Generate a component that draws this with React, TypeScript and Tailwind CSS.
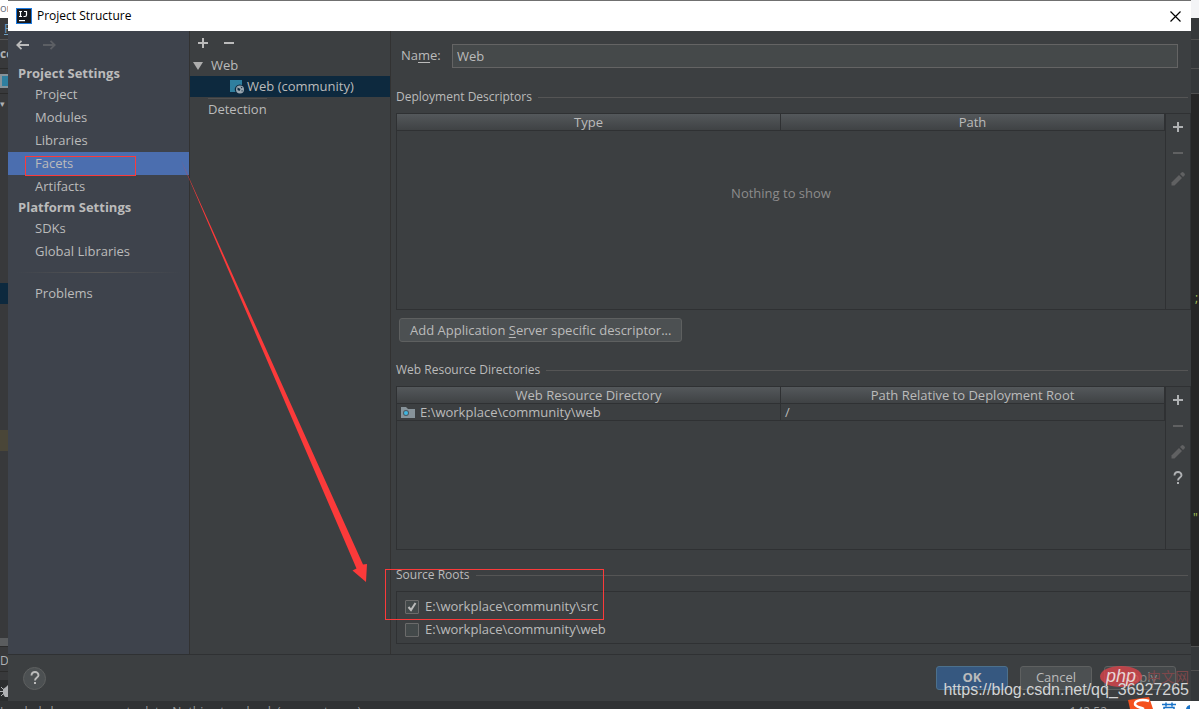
import React, { useState } from 'react';

interface ToolButtonProps {
  label: string;
  disabled?: boolean;
  children: React.ReactNode;
}

interface SourceRoot {
  path: string;
  checked: boolean;
}

const projectSettings = ['Project', 'Modules', 'Libraries', 'Facets', 'Artifacts'];
const platformSettings = ['SDKs', 'Global Libraries'];

const PlusIcon = () => (
  <svg width="10" height="10" viewBox="0 0 10 10" shapeRendering="crispEdges">
    <path d="M4 0h2v4h4v2H6v4H4V6H0V4h4z" fill="currentColor" />
  </svg>
);

const MinusIcon = () => (
  <svg width="10" height="10" viewBox="0 0 10 10" shapeRendering="crispEdges">
    <path d="M0 4h10v2H0z" fill="currentColor" />
  </svg>
);

const PencilIcon = () => (
  <svg width="14" height="14" viewBox="0 0 14 14">
    <path d="M0.5 10.5L8 3l3 3-7.500 7.500h-3z" fill="currentColor" />
    <path d="M9 2l1.500-1.500a1.500 1.500 0 0 1 2 0l1 1a1.500 1.500 0 0 1 0 2L12 5z" fill="currentColor" />
  </svg>
);

const QuestionIcon = () => (
  <svg width="10" height="14" viewBox="0 0 10 14" fill="none">
    <path d="M1.500 4.500C1.500 2 3 1 5 1s3.500 1.200 3.500 3.200C8.500 6.500 5 6.500 5 9.500" stroke="currentColor" strokeWidth="1.900" />
    <path d="M4 11h2v2H4z" fill="currentColor" />
  </svg>
);

const ArrowIcon = () => (
  <svg width="13" height="10" viewBox="0 0 13 10" fill="none">
    <path d="M13 5H1.500M5.500 0.800L1.300 5l4.200 4.200" stroke="currentColor" strokeWidth="1.800" />
  </svg>
);

const IdeaLogo = () => (
  <svg width="16" height="16" viewBox="0 0 16 16">
    <rect x="0.500" y="0.500" width="15" height="15" fill="#16181d" stroke="#1e7be0" />
    <path d="M3 3.500h3M4.500 3.500v5M3 8.500h3M8 3.500h3M10.500 3.500v3.500q0 1.500-1.500 1.500h-1.500" stroke="#fff" strokeWidth="1.200" fill="none" />
    <path d="M3 12h6v1.200H3z" fill="#fff" />
  </svg>
);

const WebFacetIcon = () => (
  <svg width="15" height="15" viewBox="0 0 15 15">
    <path d="M0 1h12v5a5 5 0 0 0-6.500 7H0z" fill="#2f7f9f" />
    <circle cx="10" cy="10.500" r="4" fill="#9aa7b0" />
    <path d="M7.500 8.500l3 1.500-1 2-2-1zM10.500 7.500l2 1-1 1zM11 12l1.500-1v1.500z" fill="#0d293e" />
  </svg>
);

const FolderIcon = () => (
  <svg width="14" height="11" viewBox="0 0 14 11">
    <path d="M0 0h5l2 2h7v9H0z" fill="#87939a" />
    <circle cx="5" cy="6" r="3" fill="#4b5a63" />
    <circle cx="5" cy="6" r="2" fill="#40b6e0" />
  </svg>
);

const ToolButton: React.FC<ToolButtonProps> = ({ label, disabled, children }) => (
  <button
    type="button"
    aria-label={label}
    disabled={disabled}
    className="flex h-[26px] w-full items-center justify-center text-[#afb1b3] disabled:text-[#606162]"
  >
    {children}
  </button>
);

const SectionTitle = ({ children }: { children: React.ReactNode }) => (
  <h2 className="mb-2 flex h-4 items-center gap-1.5 text-[12px] leading-4">
    {children}
    <span className="mr-[3px] h-px flex-1 bg-[#555555]" />
  </h2>
);

const NavItem = ({ label, active, onSelect }: { label: string; active: boolean; onSelect: () => void }) => (
  <button
    type="button"
    onClick={onSelect}
    className={`block h-[23px] w-full pl-[27px] text-left ${active ? 'bg-[#4b6eaf]' : ''}`}
  >
    {label}
  </button>
);

const HeaderRow = ({ columns }: { columns: string[] }) => (
  <thead>
    <tr className="h-[17px] bg-linear-to-b from-[#54585b] to-[#3e4143]">
      {columns.map((column) => (
        <th key={column} className="border-r border-b border-[#2f3133] p-0 font-normal leading-4">
          {column}
        </th>
      ))}
    </tr>
  </thead>
);

// Slice of the editor window that stays visible left of the dialog
const EditorLeft = () => (
  <div className="flex w-2 shrink-0 flex-col overflow-hidden bg-[#38393b] text-[#afb1b3]">
    <div className="h-[18px] bg-white text-[11px] leading-4 text-gray-500">or</div>
    <div className="h-[22px] border-b border-[#555555] pl-1 leading-5 text-[#6f9fc0] underline">F</div>
    <div className="h-[29px] border-b border-[#2b2b2b] text-[12px] font-bold leading-7">cc</div>
    <div className="flex h-[25px] items-center border-b border-[#2b2b2b]">
      <span className="h-3.5 w-2 shrink-0 border-2 border-r-0 border-[#87939a] bg-[#2f7f9f]" />
    </div>
    <div className="h-[189px] text-[9px] leading-5">▾</div>
    <div className="h-[21px] bg-[#0d293e]" />
    <div className="h-[126px]" />
    <div className="h-[21px] bg-[#4a4638]" />
    <div className="flex-1" />
    <div className="h-2 bg-[#5a5c5e]" />
    <div className="h-[26px] border-y border-[#2b2b2b] text-[12px] leading-7">D</div>
    <div className="h-2" />
    <div className="flex h-[21px] items-center bg-[#2b2d2e]">
      <svg width="8" height="14" viewBox="0 0 8 14" className="shrink-0">
        <path d="M1 3l2 2M0 7.500h3M1 12l2-2" stroke="#afb1b3" />
        <path d="M8 1L6 3l-3 2v5l2 3h3z" fill="#afb1b3" />
      </svg>
    </div>
  </div>
);

const EditorRight = () => (
  <div className="flex w-2 shrink-0 flex-col overflow-hidden bg-[#262626] text-[12px] text-[#a5c25c]">
    <div className="h-[18px] bg-gray-100" />
    <div className="h-[22px] border-b border-[#505050] bg-[#35383a]" />
    <div className="h-[29px] border-b border-[#505050] bg-[#35383a]" />
    <div className="h-[25px] border-b border-[#505050] bg-[#35383a]" />
    <div className="h-[194px]" />
    <div className="h-5 pl-1 leading-5">;</div>
    <div className="h-[200px]" />
    <div className="h-5 pl-0.5 leading-5">&quot;</div>
    <div className="flex-1" />
    <div className="h-[25px] border-y border-[#505050] bg-[#35383a]" />
    <div className="h-[30px] bg-[#35383a]" />
  </div>
);

const StatusBar = () => (
  <div className="flex h-2 shrink-0 justify-between overflow-hidden bg-[#303234] text-[12px] leading-[22px] text-[#9a9c9e]">
    <span>Loaded classes are up to date. Nothing to reload. (moments ago)</span>
    <span className="pr-[92px]">142:52</span>
  </div>
);

const Annotations = () => (
  <svg width="620" height="640" viewBox="0 0 620 640" fill="none" className="pointer-events-none absolute top-0 left-0">
    <rect x="25.500" y="156.500" width="110" height="19" stroke="#fb3a3a" />
    <rect x="385.500" y="569.500" width="218" height="50" stroke="#fb3a3a" />
    <path d="M181 160L363 564.500L367 564L366 582L352.500 570.500L356.500 568.500Z" fill="#fb3a3a" />
  </svg>
);

const Watermark = () => (
  <div className="pointer-events-none absolute right-0 bottom-0 h-12 w-64">
    <svg width="42" height="21" viewBox="0 0 42 21" className="absolute top-[5px] left-[157px]">
      <ellipse cx="21" cy="10.500" rx="21" ry="10.500" fill="#d8434a" fillOpacity="0.8" />
    </svg>
    <span className="absolute top-[5px] left-[163px] font-['Liberation_Sans'] text-[18px] leading-5 italic text-[#e8d4d4]">php</span>
    <span className="absolute top-[5px] left-[204px] font-['Noto_Sans_CJK_SC',sans-serif] text-[14px] leading-5 text-[#7d484b]">中文网</span>
    <span className="absolute right-2.5 bottom-[9px] font-['Liberation_Sans'] text-[16px] leading-5 text-[#d2d4d5]">
      https://blog.csdn.net/qq_36927265
    </span>
  </div>
);

// Input method bar that peeks in at the bottom right corner
const ImeBar = () => (
  <svg width="72" height="12" viewBox="0 0 72 12" className="pointer-events-none absolute right-0 bottom-0">
    <path d="M16 4h56v8H16z" fill="#fff" />
    <path d="M1 3L22 0l4 12H3z" fill="#f4511e" />
    <path d="M22 4c-6-2-14-1-14 3 0 3 5 3 9 5" stroke="#fff" strokeWidth="2.500" fill="none" />
    <path d="M35 7.500h14M39 5.500v4M45 5.500v4M37 12v-1.500h10V12" stroke="#1a73c8" strokeWidth="1.500" fill="none" />
    <path d="M59 12a5 5 0 0 1 4-4v4z" fill="#1a73c8" />
  </svg>
);

const App: React.FC = () => {
  const [section, setSection] = useState('Facets');
  const [name, setName] = useState('Web');
  const [roots, setRoots] = useState<SourceRoot[]>([
    { path: 'E:\\workplace\\community\\src', checked: true },
    { path: 'E:\\workplace\\community\\web', checked: false },
  ]);

  const toggleRoot = (path: string) => {
    setRoots(roots.map((root) => (root.path === path ? { ...root, checked: !root.checked } : root)));
  };

  return (
    <div className="relative flex min-h-screen flex-col overflow-hidden bg-[#323232] font-['Open_Sans',sans-serif] text-[13px] text-[#bbbbbb]">
      <div className="flex flex-1">
        <EditorLeft />

        <div className="flex min-w-0 flex-1 flex-col border-t border-[#707070] bg-[#3c3f41]">
          <header className="flex h-[30px] items-center gap-[5px] bg-white pr-2.5 pl-2 text-black">
            <IdeaLogo />
            <h1 className="flex-1 text-[12px]">Project Structure</h1>
            <button type="button" aria-label="Close">
              <svg width="11" height="11" viewBox="0 0 11 11">
                <path d="M0.500 0.500l10 10M10.500 0.500l-10 10" stroke="#000" strokeWidth="1.200" />
              </svg>
            </button>
          </header>

          <div className="flex flex-1">
            {/* Settings navigation */}
            <nav className="w-[182px] shrink-0 border-r border-[#323232] bg-[#3e434c] leading-[23px]">
              <div className="mb-[5px] flex h-7 items-center gap-3.5 pl-2">
                <button type="button" aria-label="Back" className="text-[#bbbbbb]">
                  <ArrowIcon />
                </button>
                <button type="button" aria-label="Forward" disabled className="rotate-180 text-[#5c5f64]">
                  <ArrowIcon />
                </button>
              </div>
              <h2 className="h-[19px] pl-2.5 font-bold leading-[19px]">Project Settings</h2>
              {projectSettings.map((item) => (
                <NavItem key={item} label={item} active={item === section} onSelect={() => setSection(item)} />
              ))}
              <h2 className="h-[19px] pl-2.5 font-bold leading-[19px]">Platform Settings</h2>
              {platformSettings.map((item) => (
                <NavItem key={item} label={item} active={item === section} onSelect={() => setSection(item)} />
              ))}
              <div className="mx-2 my-[9px] h-px bg-linear-to-r from-transparent via-[#555555] to-transparent" />
              <NavItem label="Problems" active={section === 'Problems'} onSelect={() => setSection('Problems')} />
            </nav>

            {/* Facet tree */}
            <div className="w-[201px] shrink-0 border-r border-[#323232] leading-[21px]">
              <div className="flex h-6 items-center gap-4 pl-2 text-[#bbbbbb]">
                <button type="button" aria-label="Add facet">
                  <PlusIcon />
                </button>
                <button type="button" aria-label="Remove facet">
                  <MinusIcon />
                </button>
              </div>
              <div className="flex h-[21px] items-center gap-2 pl-[3px]">
                <svg width="10" height="8" viewBox="0 0 10 8">
                  <path d="M0 0h10L5 8z" fill="#adadad" />
                </svg>
                Web
              </div>
              <div className="flex h-[21px] items-center gap-0.5 bg-[#0d293e] pl-10">
                <WebFacetIcon />
                Web (community)
              </div>
              <div className="flex pt-px pl-[18px]">
                <div className="border-t border-[#515151] leading-5">Detection</div>
              </div>
            </div>

            {/* Facet editor */}
            <main className="flex min-w-0 flex-1 flex-col pt-[13px] pb-2.5 pl-[5px]">
              <div className="mb-[21px] flex h-6 items-center pr-[13px] pl-[5px]">
                <label htmlFor="facet-name" className="w-[51px]">
                  Na<u className="underline-offset-2">m</u>e:
                </label>
                <input
                  id="facet-name"
                  value={name}
                  onChange={(e) => setName(e.target.value)}
                  className="h-full min-w-0 flex-1 border border-[#646464] bg-[#45494a] px-1 outline-none"
                />
              </div>

              <SectionTitle>Deployment Descriptors</SectionTitle>
              <div className="flex h-[197px] border border-[#2f3133]">
                <div className="flex flex-1 flex-col border-r border-[#2f3133]">
                  <table className="w-full table-fixed border-separate border-spacing-0">
                    <HeaderRow columns={['Type', 'Path']} />
                  </table>
                  <p className="pt-[52px] text-center leading-5 text-[#8c8c8c]">Nothing to show</p>
                </div>
                <div className="w-6">
                  <ToolButton label="Add descriptor"><PlusIcon /></ToolButton>
                  <ToolButton label="Remove descriptor" disabled><MinusIcon /></ToolButton>
                  <ToolButton label="Edit descriptor" disabled><PencilIcon /></ToolButton>
                </div>
              </div>
              <button
                type="button"
                className="mt-2 mb-5 ml-[3px] h-6 self-start rounded-[3px] border border-[#5e6060] bg-[#4c5052] px-2.5 leading-5"
              >
                Add Application <u className="underline-offset-2">S</u>erver specific descriptor...
              </button>

              <SectionTitle>Web Resource Directories</SectionTitle>
              <div className="mb-[17px] flex flex-1 border border-[#2f3133]">
                <div className="flex-1 border-r border-[#2f3133]">
                  <table className="w-full table-fixed border-separate border-spacing-0">
                    <HeaderRow columns={['Web Resource Directory', 'Path Relative to Deployment Root']} />
                    <tbody>
                      <tr className="h-[17px]">
                        <td className="border-r border-b border-[#2f3133] p-0 pl-1 leading-4">
                          <span className="flex items-center gap-[5px]">
                            <FolderIcon />
                            E:\workplace\community\web
                          </span>
                        </td>
                        <td className="border-r border-b border-[#2f3133] p-0 pl-1 leading-4">/</td>
                      </tr>
                    </tbody>
                  </table>
                </div>
                <div className="w-6">
                  <ToolButton label="Add directory"><PlusIcon /></ToolButton>
                  <ToolButton label="Remove directory" disabled><MinusIcon /></ToolButton>
                  <ToolButton label="Edit directory" disabled><PencilIcon /></ToolButton>
                  <ToolButton label="Help"><QuestionIcon /></ToolButton>
                </div>
              </div>

              <SectionTitle>Source Roots</SectionTitle>
              <div className="border border-[#2f3133] pt-[3px] pb-0.5 pl-2">
                {roots.map((root) => (
                  <label key={root.path} className="flex h-[23px] items-center gap-1.5">
                    <span className="relative flex">
                      <input
                        type="checkbox"
                        checked={root.checked}
                        onChange={() => toggleRoot(root.path)}
                        className="peer size-3.5 appearance-none rounded-[1px] border border-[#6b6b6b] bg-[#43494a]"
                      />
                      <svg
                        width="14"
                        height="14"
                        viewBox="0 0 14 14"
                        className="pointer-events-none invisible absolute inset-0 peer-checked:visible"
                      >
                        <path d="M3.500 7l2.500 3 4.500-7" stroke="#bbbbbb" strokeWidth="2" fill="none" />
                      </svg>
                    </span>
                    {root.path}
                  </label>
                ))}
              </div>
            </main>
          </div>

          <footer className="flex h-[47px] items-center gap-3 border-t border-[#2f3133] pr-[15px] pl-[15px]">
            <button
              type="button"
              aria-label="Help"
              className="mr-auto flex size-[23px] items-center justify-center rounded-full border border-[#5e6060] bg-[#4c5052]"
            >
              <QuestionIcon />
            </button>
            <button type="button" className="h-6 w-[72px] rounded-[3px] border border-[#4c708c] bg-[#365880] font-bold">
              OK
            </button>
            <button type="button" className="h-6 w-[72px] rounded-[3px] border border-[#5e6060] bg-[#4c5052]">
              Cancel
            </button>
            <button type="button" className="h-6 w-[72px] rounded-[3px] border border-[#5e6060] bg-[#45494b] text-[#8c8c8c]">
              Apply
            </button>
          </footer>
        </div>

        <EditorRight />
      </div>
      <StatusBar />

      <Annotations />
      <Watermark />
      <ImeBar />
    </div>
  );
};

export default App;
